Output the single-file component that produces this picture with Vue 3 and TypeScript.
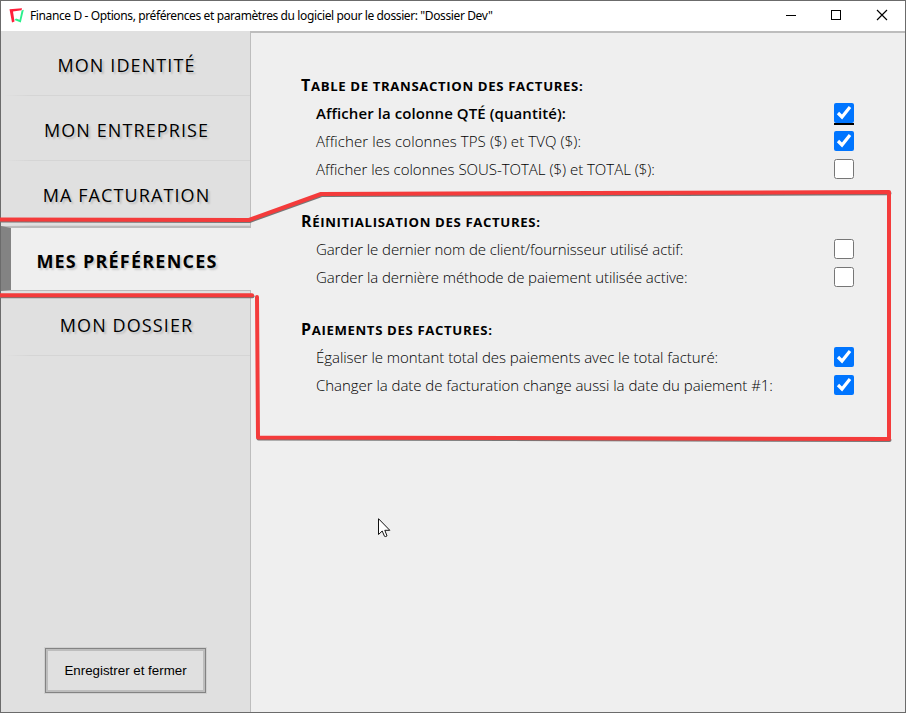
<script setup lang="ts">
import { ref } from 'vue'

interface Option { key: string; label: string; checked: boolean; focused?: boolean }
interface Section { title: string; key: string; options: Option[] }

const tabs = [
  { label: 'MON IDENTITÉ', key: 'identite' },
  { label: 'MON ENTREPRISE', key: 'entreprise' },
  { label: 'MA FACTURATION', key: 'facturation' },
  { label: 'MES PRÉFÉRENCES', key: 'preferences' },
  { label: 'MON DOSSIER', key: 'dossier' },
]
const active = ref('preferences')

const sections = ref<Section[]>([
  { title: 'Table de transaction des factures:', key: 'table', options: [
    { key: 'qte', label: 'Afficher la colonne QTÉ (quantité):', checked: true, focused: true },
    { key: 'taxes', label: 'Afficher les colonnes TPS ($) et TVQ ($):', checked: true },
    { key: 'totaux', label: 'Afficher les colonnes SOUS-TOTAL ($) et TOTAL ($):', checked: false },
  ] },
  { title: 'Réinitialisation des factures:', key: 'reset', options: [
    { key: 'client', label: 'Garder le dernier nom de client/fournisseur utilisé actif:', checked: false },
    { key: 'methode', label: 'Garder la dernière méthode de paiement utilisée active:', checked: false },
  ] },
  { title: 'Paiements des factures:', key: 'paiements', options: [
    { key: 'egaliser', label: 'Égaliser le montant total des paiements avec le total facturé:', checked: true },
    { key: 'date', label: 'Changer la date de facturation change aussi la date du paiement #1:', checked: true },
  ] },
])
</script>

<template>
  <div class="window">
    <header class="titlebar">
      <svg class="logo" width="16" height="16" viewBox="0 0 16 16">
        <path d="M0.500 1.200 13 0.300 12.500 2.300 4 3.500 5.500 13.500 3 14.500Z" fill="#ff1f3a" />
        <path d="M12.600 2.500 14.800 1.800 11.800 14.500 5.500 12 7 10.500 10.600 11.800Z" fill="#2af08c" />
      </svg>
      <span class="caption">Finance D - Options, préférences et paramètres du logiciel pour le dossier: "Dossier Dev"</span>
      <svg class="controls" width="138" height="30" viewBox="0 0 138 30" fill="none" stroke="#000">
        <path d="M19 14.500H29" />
        <rect x="64.500" y="9.500" width="9" height="9" />
        <path d="M110 9 120 19M120 9 110 19" stroke-width="1.150" />
      </svg>
    </header>
    <div class="body">
      <aside class="sidebar">
        <nav>
          <button v-for="t in tabs" :key="t.key" class="tab" :class="{ active: t.key === active }" @click="active = t.key">{{ t.label }}</button>
        </nav>
        <button class="save">Enregistrer et fermer</button>
      </aside>
      <main class="content">
        <section v-for="s in sections" :key="s.key">
          <h2>{{ s.title }}</h2>
          <label v-for="o in s.options" :key="o.key" class="row" :class="[o.key, { focused: o.focused }]">
            <span>{{ o.label }}</span>
            <input v-model="o.checked" type="checkbox" />
          </label>
        </section>
      </main>
    </div>

    <svg class="markup" width="906" height="713" viewBox="0 0 906 713" fill="none" stroke-linecap="round" stroke-linejoin="round">
      <g stroke="#777" stroke-width="4" transform="translate(0.500 1)">
        <path d="M-3 219.500 249 220 321 194 889 192.300" />
        <path d="M889 439 258 437.500" />
        <path d="M-3 295.300H252" />
      </g>
      <g stroke="#f43b3b" stroke-width="4">
        <path d="M-3 219.500 249 220 321 194 889 192V439L258 437.500 257 297" />
        <path d="M-3 295.300H252" />
      </g>
    </svg>
    <svg class="pointer" width="13" height="20" viewBox="0 0 13 20">
      <path d="M0.500 0.700V16.500L4.200 13 6.500 18.300Q7.500 19 9 17.900L6.800 12.300H11.800Z" fill="#fff" stroke="#111" />
    </svg>
  </div>
</template>

<style>
body { margin: 0; overflow: hidden; }
</style>
<style scoped>
* { box-sizing: border-box; }
.window { position: relative; width: 906px; height: 713px; display: flex; flex-direction: column; border: 1px solid #6b6b6b; background: #efefef; font-family: "Open Sans", sans-serif; color: #000; }
.titlebar { height: 30px; display: flex; align-items: center; background: #fff; padding-left: 8px; }
.caption { margin-left: 5px; padding-bottom: 1px; font: 12px "Noto Sans", sans-serif; letter-spacing: -.388px; white-space: nowrap; }
.controls { margin-left: auto; }
.body { flex: 1; display: flex; min-height: 0; }
.sidebar { width: 250px; display: flex; flex-direction: column; justify-content: space-between; background: #e0e0e0; border-right: 1px solid #bdbdbd; }
nav { display: flex; flex-direction: column; }
.tab { height: 65px; border: 0; padding: 3px 0 0 2px; background: linear-gradient(90deg, transparent 3px, #d5d5d5 30px) bottom / 100% 1px no-repeat; color: #000; font: 18px "Open Sans", sans-serif; letter-spacing: 1.1px; text-shadow: 2px 2px 2px rgba(0, 0, 0, .16); }
.tab.active { margin-right: -1px; padding: 4px 8px 0 0; border: solid #bbb; border-width: 2px 0 1px 10px; border-left-color: #838383; background: #efefef; font-weight: 700; letter-spacing: 1.22px; }
.save { align-self: center; width: 161px; height: 45px; margin-bottom: 19px; padding: 0; border: 1px solid #838383; background: #e0e0e0; box-shadow: inset 0 0 0 2px #bdbdbd, 0 0 0 1px #d0d0d0; color: #000; font: 13.333px "Liberation Sans", sans-serif; }
.content { flex: 1; padding: 38px 51px 0 50px; border-top: 2px solid #bdbdbd; }
section { margin-bottom: 24px; }
h2 { margin: 0; height: 28px; font: 700 13.2px/28px "Open Sans", sans-serif; letter-spacing: .63px; text-transform: uppercase; white-space: nowrap; }
h2::first-letter { font-size: 16px; }
.row { display: flex; height: 28px; align-items: center; padding-left: 15px; font-size: 15px; font-weight: 300; white-space: nowrap; }
.row.focused { font-weight: 600; letter-spacing: .08px; }
.focused input { box-shadow: 0 2px 0 #000; }
.taxes { letter-spacing: .09px; }
.totaux { letter-spacing: -.02px; }
.client { letter-spacing: -.1px; }
.methode { letter-spacing: -.08px; }
.egaliser, .date { letter-spacing: -.04px; }
input { margin: 0 0 0 auto; width: 20px; height: 20px; }
.markup { position: absolute; left: -1px; top: -1px; pointer-events: none; }
.pointer { position: absolute; left: 377px; top: 517px; pointer-events: none; }
</style>
